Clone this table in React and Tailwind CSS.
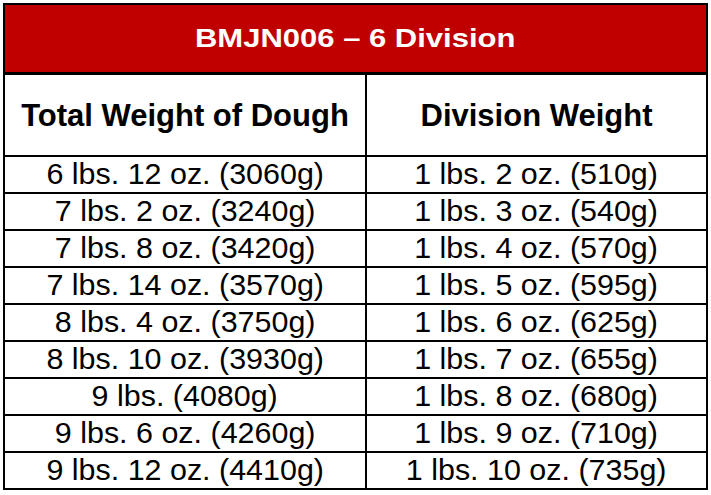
import React from "react";

const rows = [
  ["6 lbs. 12 oz. (3060g)", "1 lbs. 2 oz. (510g)"],
  ["7 lbs. 2 oz. (3240g)", "1 lbs. 3 oz. (540g)"],
  ["7 lbs. 8 oz. (3420g)", "1 lbs. 4 oz. (570g)"],
  ["7 lbs. 14 oz. (3570g)", "1 lbs. 5 oz. (595g)"],
  ["8 lbs. 4 oz. (3750g)", "1 lbs. 6 oz. (625g)"],
  ["8 lbs. 10 oz. (3930g)", "1 lbs. 7 oz. (655g)"],
  ["9 lbs. (4080g)", "1 lbs. 8 oz. (680g)"],
  ["9 lbs. 6 oz. (4260g)", "1 lbs. 9 oz. (710g)"],
  ["9 lbs. 12 oz. (4410g)", "1 lbs. 10 oz. (735g)"],
];

const App = () => {
  return (
    <div className="w-[711px] h-[495px] bg-white p-[3px] font-['Liberation_Sans',Arial,sans-serif] text-black">
      <div className="border-2 border-black">
        <div className="h-[70px] bg-[#c00000] border-b-[3px] border-black flex items-center justify-center">
          <span className="inline-block text-white font-bold text-[25px] scale-x-[1.24] leading-none">
            BMJN006 – 6 Division
          </span>
        </div>
        <div className="grid grid-cols-[362px_1fr]">
          <div className="h-[80px] border-r-2 border-black flex items-center justify-center">
            <span className="font-bold text-[31px] leading-none">
              Total Weight of Dough
            </span>
          </div>
          <div className="h-[80px] flex items-center justify-center">
            <span className="font-bold text-[31px] leading-none">
              Division Weight
            </span>
          </div>
          {rows.map(([total, division]) => (
            <React.Fragment key={total}>
              <div className="h-[37px] border-t-2 border-r-2 border-black flex items-center justify-center">
                <span className="inline-block text-[29px] scale-x-[1.05] leading-none">
                  {total}
                </span>
              </div>
              <div className="h-[37px] border-t-2 border-black flex items-center justify-center">
                <span className="inline-block text-[29px] scale-x-[1.05] leading-none">
                  {division}
                </span>
              </div>
            </React.Fragment>
          ))}
        </div>
      </div>
    </div>
  );
};

export default App;
